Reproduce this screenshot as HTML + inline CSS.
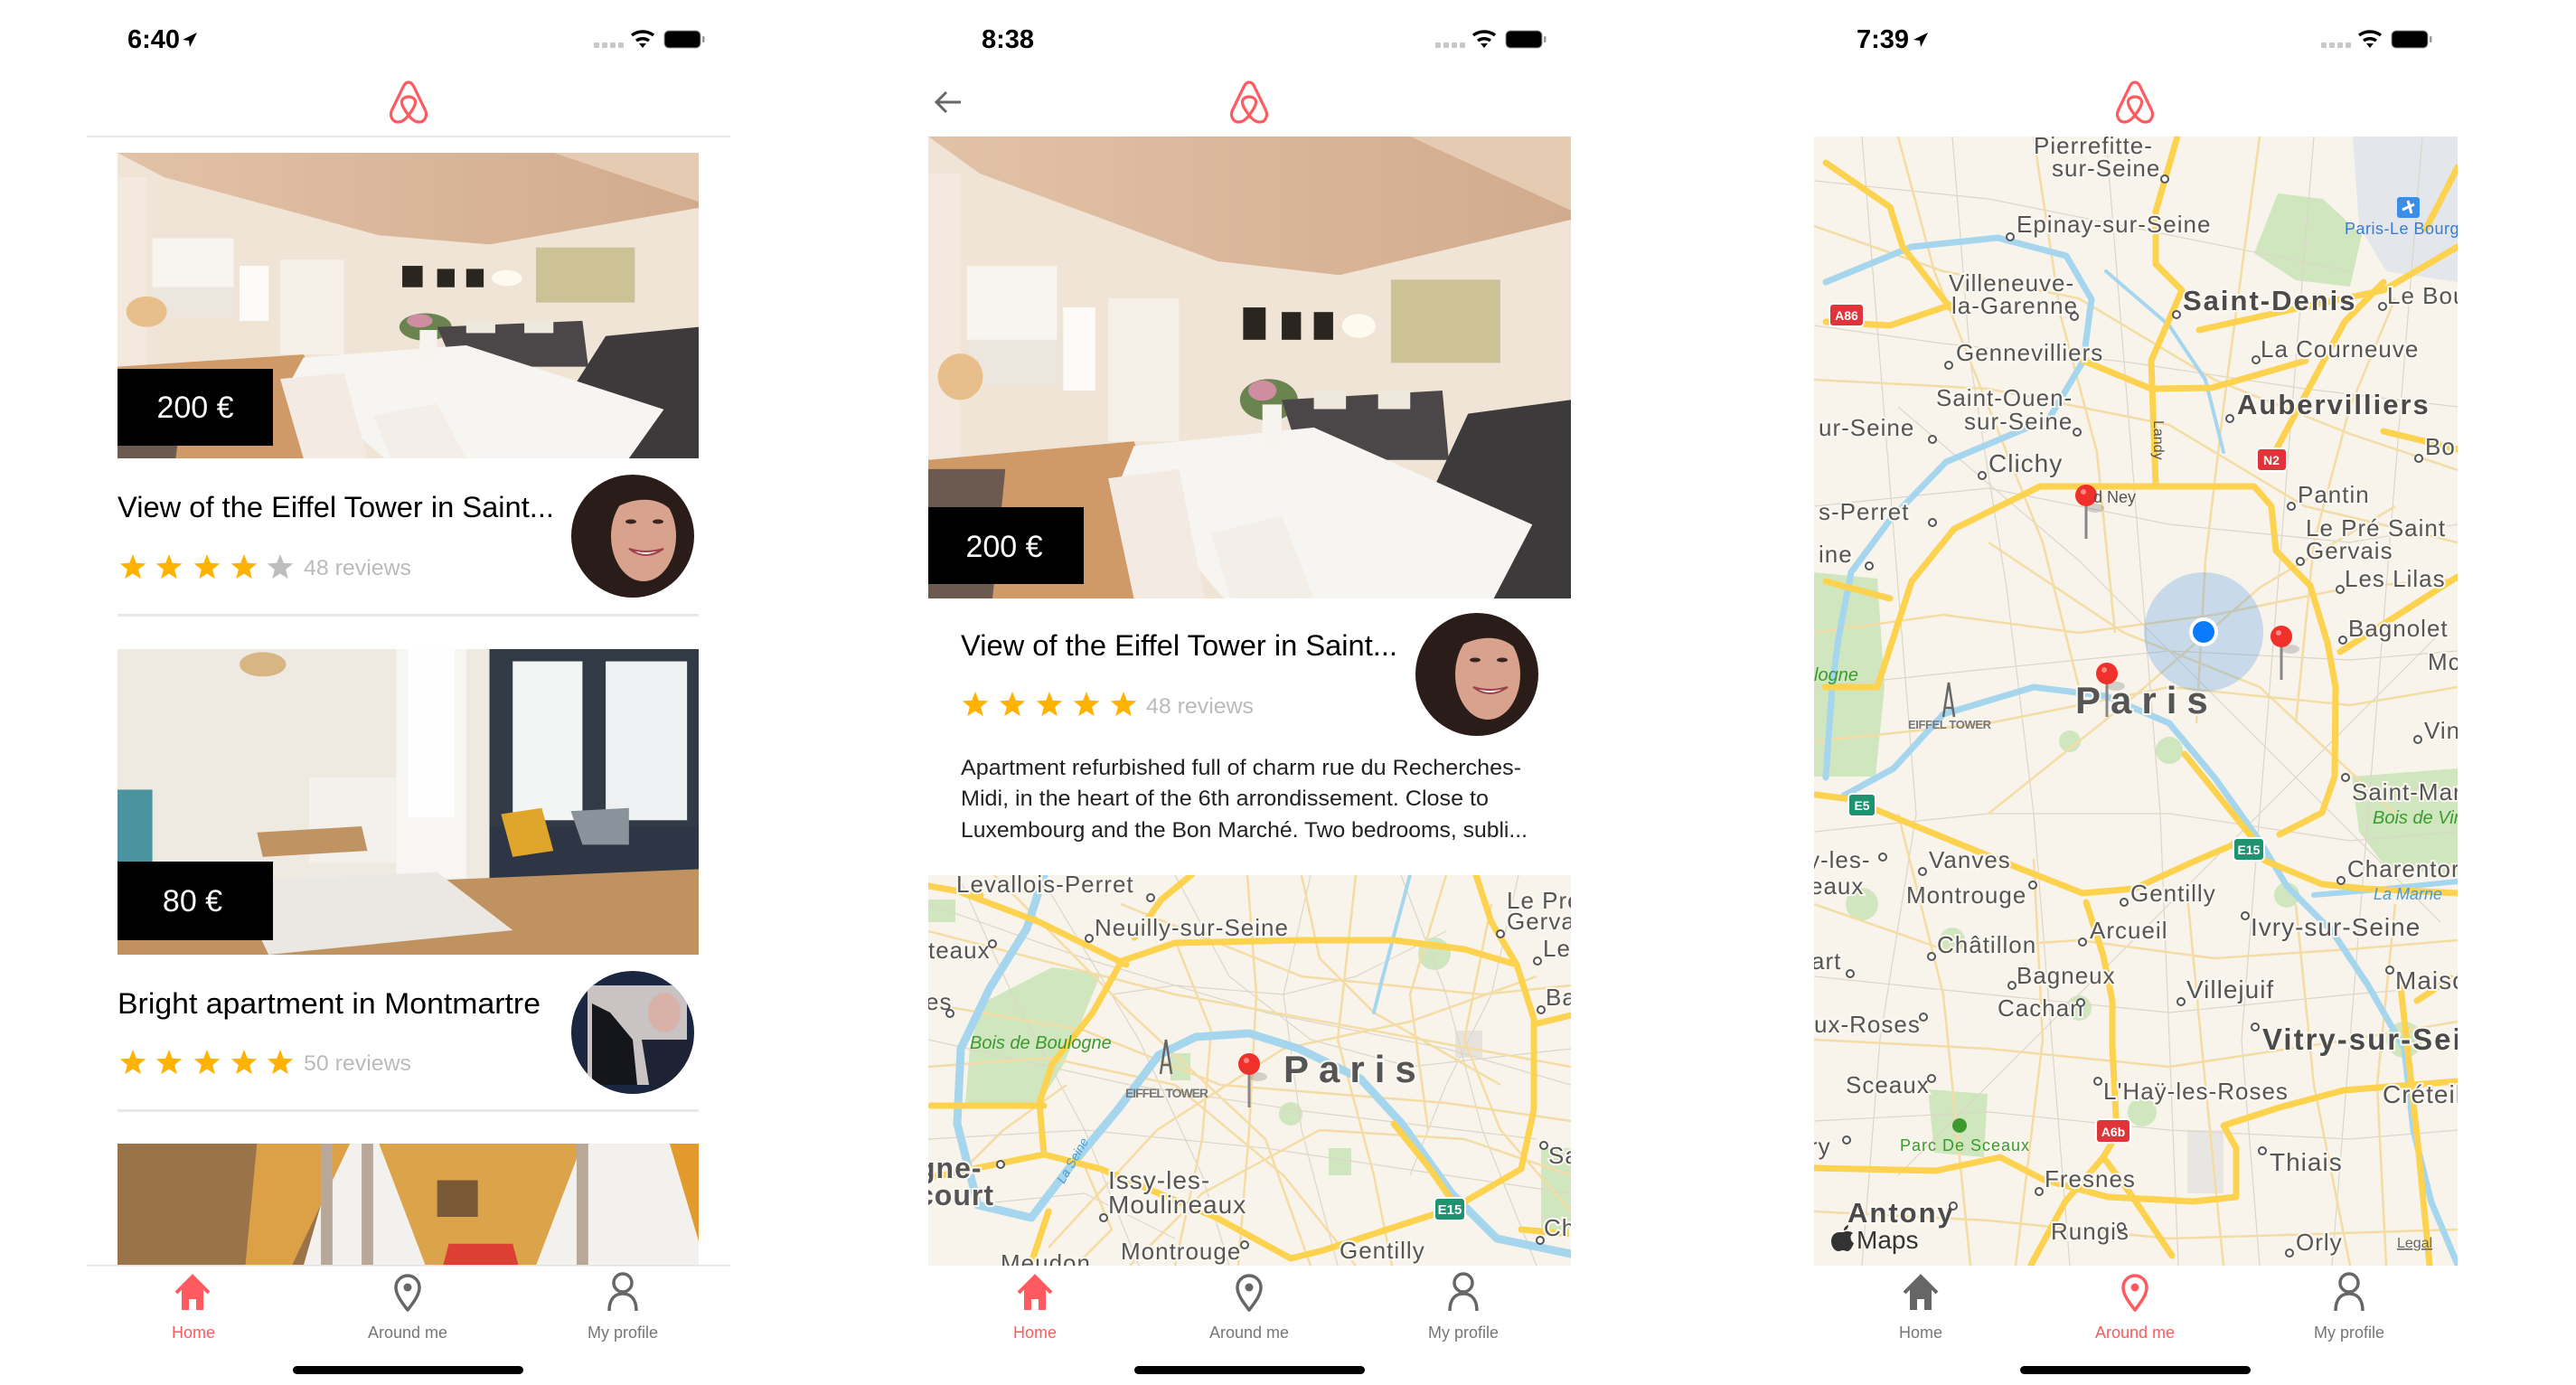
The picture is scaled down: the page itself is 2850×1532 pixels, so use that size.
<!DOCTYPE html>
<html><head><meta charset="utf-8"><style>
html,body{margin:0;padding:0;background:#fff;}
svg{display:block;font-family:"Liberation Sans",sans-serif;}
.ml{fill:#555;stroke:#fbf8f2;stroke-width:4;paint-order:stroke;font-size:26px;letter-spacing:1px;}
.mb{fill:#4a4a4a;stroke:#fbf8f2;stroke-width:4;paint-order:stroke;font-size:31px;font-weight:bold;letter-spacing:2px;}
.mg{fill:#3c9a2e;font-size:20px;font-style:italic;}
.yr{fill:none;stroke:#fcd24f;stroke-width:7;stroke-linecap:round;stroke-linejoin:round;}
.tr{fill:none;stroke:#f4dca4;stroke-width:2.5;}
.gr{fill:none;stroke:#ddd6c8;stroke-width:1.2;}
.rv{fill:none;stroke:#a6d6ee;stroke-width:9;stroke-linecap:round;stroke-linejoin:round;}
.pk{fill:#cfe6bf;}
.dot{fill:#fff;stroke:#555;stroke-width:2;}
</style></head><body>
<svg width="2850" height="1532" viewBox="0 0 2850 1532" xmlns="http://www.w3.org/2000/svg">
<defs>
<path id="star" d="M0,-15 L3.82,-5.26 L14.27,-4.64 L6.18,2.01 L8.82,12.14 L0,6.5 L-8.82,12.14 L-6.18,2.01 L-14.27,-4.64 L-3.82,-5.26 Z"/>
<linearGradient id="ceil" x1="0" y1="0" x2="1" y2="0"><stop offset="0" stop-color="#e2c2a6"/><stop offset="1" stop-color="#d2ab8d"/></linearGradient>
<symbol id="room1" viewBox="0 0 100 100" preserveAspectRatio="none">
<rect width="100" height="100" fill="#f0e4d7"/>
<polygon points="0,0 100,0 100,18 64,30 45,27 8,8" fill="url(#ceil)"/>
<polygon points="75,0 100,0 100,16" fill="#e6cbb3"/>
<rect x="0" y="8" width="5" height="70" fill="#f3e9de"/>
<rect x="6" y="28" width="14" height="16" fill="#f8f4ef"/>
<rect x="6" y="44" width="14" height="10" fill="#ece6df"/>
<rect x="21" y="37" width="5" height="18" fill="#fdfbf8"/>
<rect x="28" y="35" width="11" height="31" fill="#f6efe7"/>
<rect x="49" y="37" width="3.5" height="7" fill="#2b2520"/><rect x="55" y="38" width="3" height="6" fill="#2b2520"/><rect x="60" y="38" width="3" height="6" fill="#2b2520"/>
<rect x="72" y="31" width="17" height="18" fill="#cdc196"/>
<circle cx="67" cy="41" r="2.6" fill="#fffaf0"/>
<ellipse cx="5" cy="52" rx="3.5" ry="5" fill="#e8bf8a"/>
<circle cx="53" cy="57" r="4.5" fill="#6a8450"/><circle cx="52" cy="55" r="2.2" fill="#cf8da2"/>
<polygon points="55,57 80,55 81,70 58,70" fill="#4b4748"/>
<rect x="60" y="55" width="5" height="4" fill="#efe8dc"/><rect x="70" y="55" width="5" height="4" fill="#efe8dc"/>
<polygon points="84,60 100,57 100,100 82,100 78,78" fill="#3c3a3a"/>
<polygon points="0,70 32,66 42,100 0,100" fill="#cf9a68"/>
<polygon points="0,72 12,72 10,100 0,100" fill="#6c5a50"/>
<polygon points="32,67 60,63 94,84 88,100 46,100 30,74" fill="#f7f5f2"/>
<polygon points="28,74 39,72 43,100 32,100" fill="#f3ebe3"/>
<polygon points="44,86 55,82 60,100 47,100" fill="#f4eee8"/>
<rect x="52" y="58" width="3" height="10" fill="#f7f3ee"/>
</symbol>
<symbol id="room2" viewBox="0 0 100 100" preserveAspectRatio="none">
<rect width="100" height="100" fill="#efeae1"/>
<rect x="48" y="0" width="12" height="75" fill="#f8f6f2"/>
<rect x="50" y="0" width="8" height="55" fill="#fefefe"/>
<rect x="33" y="42" width="15" height="28" fill="#f4f1ec"/>
<rect x="64" y="0" width="36" height="78" fill="#323a45"/>
<rect x="68" y="4" width="12" height="52" fill="#f3f4f4"/><rect x="84" y="4" width="14" height="52" fill="#eef0f1"/>
<rect x="64" y="58" width="36" height="42" fill="#2e3544"/>
<polygon points="66,54 73,52 75,66 68,68" fill="#e0a62c"/>
<polygon points="78,53 88,52 88,64 80,64" fill="#8a939c"/>
<ellipse cx="25" cy="5" rx="4" ry="4" fill="#d8b684"/>
<polygon points="0,80 100,72 100,100 0,100" fill="#c0925f"/>
<polygon points="20,76 55,73 68,92 26,100" fill="#ebe8e3"/>
<polygon points="24,60 42,58 43,66 25,68" fill="#bf9462"/>
<rect x="0" y="46" width="6" height="28" fill="#4a94a0"/>
</symbol>
<symbol id="room3" viewBox="0 0 100 100" preserveAspectRatio="none">
<rect width="100" height="100" fill="#f3f1ee"/>
<polygon points="0,0 38,0 32,100 0,100" fill="#9a7448"/>
<polygon points="24,0 40,0 30,100 22,100" fill="#dca046"/>
<rect x="35" y="0" width="2" height="100" fill="#b8a89a"/>
<rect x="42" y="0" width="2" height="100" fill="#b8a89a"/>
<polygon points="45,0 80,0 72,100 53,100" fill="#dca44a"/>
<rect x="55" y="30" width="7" height="30" fill="#7a5a36"/>
<polygon points="57,82 68,82 69,100 56,100" fill="#dd4033"/>
<rect x="79" y="0" width="2" height="100" fill="#b8a89a"/>
<polygon points="95,0 100,0 100,80" fill="#e39a2d"/>
</symbol>
<clipPath id="c1"><circle cx="700" cy="593" r="68"/></clipPath>
<clipPath id="c2"><circle cx="700" cy="1142" r="68"/></clipPath>
<clipPath id="c3"><circle cx="1634" cy="746" r="68"/></clipPath>
<clipPath id="m2"><rect x="1027" y="968" width="711" height="432"/></clipPath>
<clipPath id="m3"><rect x="2007" y="151" width="712" height="1249"/></clipPath>
<g id="face">
<rect x="-70" y="-70" width="140" height="140" fill="#2a1c18"/>
<ellipse cx="12" cy="0" rx="36" ry="50" fill="#d9a28c"/>
<path d="M-30,-50 C-10,-70 30,-65 48,-40 L52,-15 C40,-42 10,-48 -22,-30 Z" fill="#2a1c18"/>
<ellipse cx="-2" cy="-16" rx="6" ry="2.5" fill="#3a2420"/><ellipse cx="28" cy="-16" rx="6" ry="2.5" fill="#3a2420"/>
<path d="M-4,14 Q14,28 34,14 Q14,20 -4,14 Z" fill="#fff" stroke="#a0404a" stroke-width="2"/>
</g>
<g id="logo" fill="none" stroke="#ff5a5f" stroke-width="3.2" stroke-linejoin="round">
<path d="M24 3 C21.5 3 19.8 4.6 18.5 7.2 L5.5 34 C3 39.5 5.5 47 12.5 47 C17 47 20.5 44 24 39.5 C27.5 44 31 47 35.5 47 C42.5 47 45 39.5 42.5 34 L29.5 7.2 C28.2 4.6 26.5 3 24 3 Z"/>
<path d="M24 39.5 C19.5 33.5 16.5 29 16.5 25 C16.5 21.3 19.8 19 24 19 C28.2 19 31.5 21.3 31.5 25 C31.5 29 28.5 33.5 24 39.5"/>
</g>
<g id="stat">
<rect x="561" y="47" width="6" height="6" rx="1" fill="#c8c8c8"/><rect x="570" y="47" width="6" height="6" rx="1" fill="#c8c8c8"/><rect x="579" y="47" width="6" height="6" rx="1" fill="#c8c8c8"/><rect x="588" y="47" width="6" height="6" rx="1" fill="#c8c8c8"/>
<path d="M603,39 A20,20 0 0 1 627,39" fill="none" stroke="#000" stroke-width="3.5"/>
<path d="M608,45 A12,12 0 0 1 622,45" fill="none" stroke="#000" stroke-width="3.5"/>
<path d="M611,48 L615,53 L619,48 Z" fill="#000"/>
<rect x="639" y="34" width="40" height="19" rx="5" fill="#000" stroke="#999" stroke-width="1"/>
<rect x="681" y="40" width="2.5" height="7" rx="1" fill="#999"/>
</g>
<g id="home"><path d="M-18,-1 L0,-19 L18,-1" fill="none" stroke-width="4"/><path d="M-12,-6 L0,-17 L12,-6 V18 H4 V6 H-4 V18 H-12 Z" stroke="none"/></g>
<g id="pin"><path d="M0,20 C-7,11 -13,3 -13,-5 A13,13 0 0 1 13,-5 C13,3 7,11 0,20 Z" fill="none" stroke-width="3.5" stroke-linejoin="round"/><circle cx="0" cy="-5" r="4.5" stroke="none"/></g>
<g id="user" fill="none" stroke-width="3.5"><circle cx="0" cy="-10" r="10"/><path d="M-15,21 C-15,7 -8,2 0,2 C8,2 15,7 15,21"/></g>
<g id="mpin"><ellipse cx="10" cy="14" rx="10" ry="5" fill="#000" opacity="0.15"/><line x1="0" y1="0" x2="0" y2="48" stroke="#888" stroke-width="3"/><circle cx="0" cy="0" r="12" fill="#f0302a"/><circle cx="-3" cy="-4" r="3" fill="#ff8a85"/></g>
</defs>

<!-- ===== PHONE 1 ===== -->
<text x="141" y="53" font-size="29" font-weight="bold" fill="#000">6:40</text>
<path d="M218,36 L202,44 L209,45 L210,52 Z" fill="#000"/>
<use href="#stat" x="96"/>
<use href="#logo" x="428" y="88"/>
<rect x="96" y="150" width="712" height="2" fill="#e8e8e8"/>
<use href="#room1" x="130" y="169" width="643" height="338"/>
<rect x="130" y="408" width="172" height="85" fill="#000"/>
<text x="216" y="462" font-size="34" fill="#fff" text-anchor="middle">200 €</text>
<text x="130" y="572" font-size="32" fill="#000" textLength="483" lengthAdjust="spacingAndGlyphs">View of the Eiffel Tower in Saint...</text>
<use href="#star" x="147" y="628" fill="#ffb300"/><use href="#star" x="187" y="628" fill="#ffb300"/><use href="#star" x="229" y="628" fill="#ffb300"/><use href="#star" x="270" y="628" fill="#ffb300"/><use href="#star" x="310" y="628" fill="#bdbdbd"/>
<text x="336" y="636" font-size="24" fill="#bbb" textLength="119" lengthAdjust="spacingAndGlyphs">48 reviews</text>
<g clip-path="url(#c1)"><use href="#face" x="700" y="593"/></g>
<rect x="130" y="679" width="643" height="3" fill="#e8e8e8"/>
<use href="#room2" x="130" y="718" width="643" height="338"/>
<rect x="130" y="953" width="172" height="87" fill="#000"/>
<text x="213" y="1008" font-size="34" fill="#fff" text-anchor="middle">80 €</text>
<text x="130" y="1121" font-size="32" fill="#000" textLength="468" lengthAdjust="spacingAndGlyphs">Bright apartment in Montmartre</text>
<use href="#star" x="147" y="1176" fill="#ffb300"/><use href="#star" x="187" y="1176" fill="#ffb300"/><use href="#star" x="229" y="1176" fill="#ffb300"/><use href="#star" x="270" y="1176" fill="#ffb300"/><use href="#star" x="310" y="1176" fill="#ffb300"/>
<text x="336" y="1184" font-size="24" fill="#bbb" textLength="119" lengthAdjust="spacingAndGlyphs">50 reviews</text>
<g clip-path="url(#c2)"><rect x="630" y="1072" width="140" height="140" fill="#1b2640"/><rect x="650" y="1090" width="110" height="110" fill="#c9c3c4"/><path d="M655,1110 L675,1120 L700,1150 L705,1200 L655,1200 Z" fill="#15151c"/><ellipse cx="735" cy="1120" rx="18" ry="22" fill="#d8b2a8"/><path d="M710,1150 L770,1150 L770,1212 L720,1212 Z" fill="#1d2235"/></g>
<rect x="130" y="1227" width="643" height="3" fill="#e8e8e8"/>
<use href="#room3" x="130" y="1265" width="643" height="135"/>
<rect x="96" y="1399" width="712" height="133" fill="#fff"/>
<rect x="96" y="1399" width="712" height="1.5" fill="#e2e2e2"/>
<use href="#home" x="213" y="1431" fill="#ff5a5f" stroke="#ff5a5f"/>
<use href="#pin" x="451" y="1429" fill="#666" stroke="#666"/>
<use href="#user" x="689" y="1429" stroke="#666"/>
<text x="214" y="1480" font-size="18" fill="#ff5a5f" text-anchor="middle">Home</text>
<text x="451" y="1480" font-size="18" fill="#777" text-anchor="middle">Around me</text>
<text x="689" y="1480" font-size="18" fill="#777" text-anchor="middle">My profile</text>
<rect x="324" y="1511" width="255" height="9" rx="4.5" fill="#000"/>

<!-- ===== PHONE 2 ===== -->
<text x="1086" y="53" font-size="29" font-weight="bold" fill="#000">8:38</text>
<use href="#stat" x="1027"/>
<path d="M1063,113 H1036 M1047,102 L1036,113 L1047,124" fill="none" stroke="#666" stroke-width="3"/>
<use href="#logo" x="1358" y="88"/>
<use href="#room1" x="1027" y="151" width="711" height="511"/>
<rect x="1027" y="561" width="172" height="85" fill="#000"/>
<text x="1111" y="616" font-size="34" fill="#fff" text-anchor="middle">200 €</text>
<text x="1063" y="725" font-size="32" fill="#000" textLength="483" lengthAdjust="spacingAndGlyphs">View of the Eiffel Tower in Saint...</text>
<use href="#star" x="1079" y="780" fill="#ffb300"/><use href="#star" x="1120" y="780" fill="#ffb300"/><use href="#star" x="1161" y="780" fill="#ffb300"/><use href="#star" x="1202" y="780" fill="#ffb300"/><use href="#star" x="1243" y="780" fill="#ffb300"/>
<text x="1268" y="789" font-size="24" fill="#bbb" textLength="119" lengthAdjust="spacingAndGlyphs">48 reviews</text>
<g clip-path="url(#c3)"><use href="#face" x="1634" y="746"/></g>
<text x="1063" y="857" font-size="24" fill="#222" textLength="620" lengthAdjust="spacingAndGlyphs">Apartment refurbished full of charm rue du Recherches-</text>
<text x="1063" y="891" font-size="24" fill="#222" textLength="584" lengthAdjust="spacingAndGlyphs">Midi, in the heart of the 6th arrondissement. Close to</text>
<text x="1063" y="926" font-size="24" fill="#222" textLength="627" lengthAdjust="spacingAndGlyphs">Luxembourg and the Bon Marché. Two bedrooms, subli...</text>

<g clip-path="url(#m2)">
<rect x="1027" y="968" width="711" height="432" fill="#f8f4ec"/>
<polygon class="pk" points="1073,1160 1086,1110 1164,1070 1218,1077 1177,1177 1150,1220 1068,1220"/>
<circle class="pk" cx="1587" cy="1055" r="18"/><rect class="pk" x="1705" y="1270" width="40" height="95"/>
<rect class="pk" x="1295" y="1165" width="22" height="30"/><circle class="pk" cx="1428" cy="1232" r="13"/><rect class="pk" x="1027" y="995" width="30" height="25"/><rect class="pk" x="1470" y="1270" width="25" height="30"/>
<rect x="1610" y="1140" width="30" height="30" fill="#e6e3df"/>
<g class="gr">
<path d="M1027,1000 L1200,1060 L1400,1120 L1600,1160 L1738,1200"/><path d="M1060,968 L1120,1100 L1200,1250 L1260,1400"/><path d="M1150,968 L1260,1150 L1330,1300 L1360,1400"/>
<path d="M1027,1260 L1200,1250 L1400,1270 L1600,1300 L1738,1320"/><path d="M1450,968 L1420,1100 L1440,1250 L1480,1400"/><path d="M1550,968 L1600,1100 L1640,1250 L1700,1400"/>
<path d="M1027,1150 L1250,1200 L1450,1230 L1700,1260"/><path d="M1300,968 L1360,1080 L1450,1150 L1560,1180 L1738,1160"/><path d="M1680,968 L1650,1100 L1600,1200 L1560,1300"/>
<path d="M1230,1100 L1300,1090 L1420,1100 L1500,1080 L1600,1030"/><path d="M1100,1330 L1200,1320 L1300,1370"/>
</g>
<g class="tr">
<path d="M1027,1030 L1300,1100 L1738,1180"/><path d="M1100,968 L1250,1120 L1400,1260 L1450,1400"/><path d="M1027,1110 L1200,1140 L1350,1200 L1600,1220 L1738,1240"/>
<path d="M1380,968 L1390,1100 L1382,1250 L1370,1400"/><path d="M1500,968 L1480,1150 L1520,1300 L1540,1400"/><path d="M1300,1040 L1340,1140 L1330,1260 L1300,1400"/>
<path d="M1600,968 L1560,1100 L1580,1250"/><path d="M1027,1180 L1160,1170 L1300,1200 L1420,1300 L1500,1400"/><path d="M1240,1000 L1440,1080 L1640,1100 L1738,1090"/>
<path d="M1160,1380 L1280,1250 L1420,1160 L1560,1130 L1700,1080"/><path d="M1250,1400 L1330,1320 L1460,1250 L1620,1260 L1738,1300"/><path d="M1440,968 L1460,1060 L1520,1120 L1660,1200"/>
<path d="M1200,1290 L1230,1360 L1190,1400"/><path d="M1060,1300 L1110,1250 L1180,1200"/><path d="M1650,1000 L1620,1150 L1660,1250 L1738,1340"/>
</g>
<path class="rv" d="M1155,968 L1136,1027 L1095,1093 L1063,1160 L1059,1243 L1082,1333 L1141,1347 L1182,1293 L1237,1227 L1282,1167 L1323,1147 L1382,1143 L1437,1160 L1505,1193 L1551,1243 L1606,1320 L1656,1370 L1738,1387"/>
<path class="rv" style="stroke-width:4" d="M1560,968 L1530,1080 L1520,1120"/>
<g class="yr">
<path d="M1633,968 L1650,1020 L1678,1067 L1697,1127 L1697,1227 L1683,1293 L1619,1330 L1587,1343 L1464,1383 L1428,1392"/>
<path d="M1300,1043 L1241,1063 L1209,1120 L1164,1177 L1150,1220 L1155,1277 L1218,1293 L1346,1347 L1428,1392"/>
<path d="M1300,1043 L1437,1040 L1542,1040 L1620,1050 L1678,1067"/>
<path d="M1063,987 L1150,1020 L1246,1067"/><path d="M1027,980 L1085,990"/>
<path d="M1255,1037 L1285,995 L1319,967"/>
<path d="M1030,1223 L1155,1223"/><path d="M1027,1303 L1155,1277"/>
<path d="M1542,1243 L1580,1290 L1610,1333"/>
<path d="M1697,1133 L1738,1123"/><path d="M1683,1360 L1738,1365"/>
<path d="M1140,1400 L1160,1340"/>
</g>
<text class="ml" x="1058" y="987">Levallois-Perret</text><circle class="dot" cx="1273" cy="993" r="4"/>
<text class="ml" x="1211" y="1035">Neuilly-sur-Seine</text><circle class="dot" cx="1205" cy="1038" r="4"/>
<text class="ml" x="1027" y="1060">teaux</text><circle class="dot" cx="1098" cy="1044" r="4"/>
<text class="ml" x="1024" y="1117">es</text><circle class="dot" cx="1051" cy="1121" r="4"/>
<text class="mg" x="1073" y="1160">Bois de Boulogne</text>
<text x="1420" y="1197" font-size="42" font-weight="bold" fill="#555" letter-spacing="11" stroke="#fbf8f2" stroke-width="4" paint-order="stroke">Paris</text>
<path d="M1290,1150 L1284,1188 M1290,1150 L1296,1188 M1285,1178 L1295,1178" stroke="#666" stroke-width="2.5" fill="none"/>
<text x="1245" y="1214" font-size="14" font-weight="bold" fill="#777" textLength="92">EIFFEL TOWER</text>
<text class="ml" x="1667" y="1005">Le Pré</text>
<text class="ml" x="1667" y="1028">Gervai</text><circle class="dot" cx="1660" cy="1033" r="4"/>
<text class="ml" x="1707" y="1058">Les</text><circle class="dot" cx="1701" cy="1063" r="4"/>
<text class="ml" x="1710" y="1112">Ba</text><circle class="dot" cx="1705" cy="1117" r="4"/>
<text class="ml" x="1713" y="1287">Sa</text><circle class="dot" cx="1708" cy="1267" r="4"/>
<text class="ml" x="1708" y="1367">Ch</text><circle class="dot" cx="1704" cy="1372" r="4"/>
<text class="ml" x="1015" y="1303" style="font-size:32px;font-weight:bold">gne-</text><circle class="dot" cx="1107" cy="1288" r="4"/>
<text class="ml" x="1015" y="1333" style="font-size:32px;font-weight:bold">court</text>
<text class="ml" x="1226" y="1315" style="font-size:28px">Issy-les-</text>
<text class="ml" x="1226" y="1342" style="font-size:28px">Moulineaux</text><circle class="dot" cx="1221" cy="1347" r="4"/>
<text class="ml" x="1240" y="1393">Montrouge</text><circle class="dot" cx="1377" cy="1377" r="4"/>
<text class="ml" x="1482" y="1392">Gentilly</text>
<text class="ml" x="1107" y="1406">Meudon</text>
<text x="1177" y="1310" font-size="14" font-style="italic" fill="#4a9ad0" transform="rotate(-60 1177 1310)">La Seine</text>
<rect x="1587" y="1325" width="34" height="25" rx="4" fill="#1f9270" stroke="#fff" stroke-width="2"/>
<text x="1604" y="1343" font-size="15" font-weight="bold" fill="#fff" text-anchor="middle">E15</text>
<use href="#mpin" x="1382" y="1177"/>
</g>

<rect x="1027" y="1400" width="711" height="132" fill="#fff"/>
<use href="#home" x="1145" y="1431" fill="#ff5a5f" stroke="#ff5a5f"/>
<use href="#pin" x="1382" y="1429" fill="#666" stroke="#666"/>
<use href="#user" x="1619" y="1429" stroke="#666"/>
<text x="1145" y="1480" font-size="18" fill="#ff5a5f" text-anchor="middle">Home</text>
<text x="1382" y="1480" font-size="18" fill="#777" text-anchor="middle">Around me</text>
<text x="1619" y="1480" font-size="18" fill="#777" text-anchor="middle">My profile</text>
<rect x="1255" y="1511" width="255" height="9" rx="4.5" fill="#000"/>

<!-- ===== PHONE 3 ===== -->
<text x="2054" y="53" font-size="29" font-weight="bold" fill="#000">7:39</text>
<path d="M2133,36 L2117,44 L2124,45 L2125,52 Z" fill="#000"/>
<use href="#stat" x="2007"/>
<use href="#logo" x="2338" y="88"/>
<g clip-path="url(#m3)">
<rect x="2007" y="151" width="712" height="1249" fill="#f8f4ec"/>
<polygon points="2603,151 2719,151 2719,312 2640,300 2610,250" fill="#e3e6ea"/>
<polygon class="pk" points="2520,214 2570,220 2613,260 2600,317 2540,310 2494,280"/>
<polygon class="pk" points="2007,633 2077,640 2085,760 2075,859 2007,859"/>
<polygon class="pk" points="2602,859 2719,850 2719,968 2640,960 2610,920"/>
<polygon class="pk" points="2133,1205 2199,1210 2195,1280 2140,1275"/>
<circle class="pk" cx="2160" cy="1040" r="14"/><circle class="pk" cx="2290" cy="820" r="12"/><circle class="pk" cx="2400" cy="830" r="15"/><circle class="pk" cx="2530" cy="990" r="14"/><circle class="pk" cx="2370" cy="1230" r="16"/><circle class="pk" cx="2660" cy="1150" r="20"/><circle class="pk" cx="2060" cy="1000" r="18"/><circle class="pk" cx="2300" cy="1115" r="14"/>
<rect x="2420" y="1250" width="40" height="70" fill="#e8e6e2"/>
<g class="gr">
<path d="M2007,200 L2200,220 L2400,260 L2600,300"/><path d="M2007,360 L2150,380 L2350,400 L2550,430 L2719,450"/><path d="M2007,560 L2200,540 L2400,580 L2600,600 L2719,580"/>
<path d="M2007,760 L2200,740 L2400,720 L2600,730 L2719,720"/><path d="M2007,920 L2200,900 L2400,900 L2600,930 L2719,920"/><path d="M2007,1080 L2200,1100 L2400,1120 L2600,1100 L2719,1090"/>
<path d="M2007,1240 L2200,1230 L2400,1250 L2600,1260 L2719,1250"/><path d="M2160,151 L2180,400 L2220,650 L2250,900 L2270,1150 L2290,1400"/>
<path d="M2330,151 L2350,400 L2370,650 L2390,900 L2400,1150 L2410,1400"/><path d="M2560,151 L2540,400 L2520,650 L2500,900 L2480,1150 L2500,1400"/>
<path d="M2680,151 L2660,400 L2640,650 L2620,900 L2600,1150 L2580,1400"/><path d="M2060,151 L2080,400 L2100,650 L2120,900 L2080,1150 L2060,1400"/>
<path d="M2100,450 L2300,620 L2500,820 L2700,1020"/><path d="M2100,1300 L2300,1100 L2500,900 L2700,700"/>
</g>
<g class="tr">
<path d="M2007,250 L2150,300 L2300,330 L2450,420 L2600,480 L2719,520"/><path d="M2007,420 L2200,430 L2400,470 L2550,560 L2719,600"/>
<path d="M2100,151 L2140,300 L2200,450 L2260,600 L2300,760"/><path d="M2250,151 L2280,350 L2320,500 L2340,700"/>
<path d="M2500,151 L2480,300 L2460,450 L2440,620 L2430,800"/><path d="M2650,330 L2600,450 L2560,600 L2540,800"/>
<path d="M2007,700 L2150,680 L2300,700 L2450,680 L2600,650 L2719,640"/><path d="M2007,820 L2200,800 L2400,760 L2600,780 L2719,760"/>
<path d="M2007,1000 L2150,1050 L2300,1040 L2450,1060 L2600,1050 L2719,1040"/><path d="M2007,1150 L2200,1160 L2400,1180 L2600,1150 L2719,1130"/>
<path d="M2100,900 L2150,1100 L2180,1400"/><path d="M2250,950 L2260,1150 L2230,1400"/><path d="M2420,990 L2440,1200 L2460,1400"/>
<path d="M2540,1000 L2560,1200 L2600,1400"/><path d="M2650,1000 L2630,1200 L2640,1400"/><path d="M2007,1340 L2200,1350 L2400,1370 L2719,1360"/>
<path d="M2200,600 L2350,700 L2500,760 L2650,900"/><path d="M2200,900 L2350,780 L2500,650 L2650,560"/>
</g>
<path class="rv" style="stroke-width:7" d="M2020,312 L2115,273 L2210,263 L2286,283 L2314,331 L2305,399 L2267,463 L2210,487 L2153,511 L2091,575 L2048,633 L2034,706 L2027,760 L2020,860"/>
<path class="rv" style="stroke-width:7" d="M2040,880 L2095,850 L2150,790 L2250,760 L2330,770 L2400,800 L2450,860 L2500,930 L2530,980 L2580,1030 L2620,1090 L2660,1160 L2670,1250 L2690,1330 L2719,1399"/>
<path class="rv" style="stroke-width:6" d="M2560,990 L2620,985 L2719,975"/>
<path class="rv" style="stroke-width:4" d="M2330,300 L2400,360 L2440,420 L2460,500"/>
<g class="yr">
<path d="M2409,151 L2385,234 L2385,292 L2414,321 L2380,399 L2385,536"/>
<path d="M2020,180 L2091,229 L2105,273 L2158,341"/><path d="M2020,356 L2091,360 L2162,336"/>
<path d="M2433,365 L2542,341 L2637,321 L2719,273"/><path d="M2719,185 L2684,253"/>
<path d="M2257,538 L2494,538 L2513,560 L2518,609 L2556,648 L2575,711 L2584,760 L2583,859 L2569,899 L2522,923"/>
<path d="M2257,538 L2162,585 L2115,643 L2077,760 L2019,760"/>
<path d="M2305,399 L2380,430 L2447,429 L2551,399"/>
<path d="M2513,507 L2594,356 L2637,312"/><path d="M2637,477 L2719,497"/>
<path d="M2020,643 L2091,662"/><path d="M2719,638 L2589,721"/>
<path d="M2009,879 L2047,884 L2142,923 L2228,958 L2304,988 L2361,983 L2427,953 L2474,933 L2508,953 L2569,978 L2617,983 L2719,988"/>
<path d="M2417,834 L2493,928"/>
<path d="M2308,998 L2327,1057 L2337,1107 L2337,1156 L2342,1255 L2327,1280 L2285,1329 L2247,1399"/>
<path d="M2327,1280 L2356,1319 L2403,1389"/>
<path d="M2007,1292 L2142,1295 L2213,1280 L2261,1305 L2332,1324 L2427,1329 L2474,1324 L2474,1270 L2460,1245 L2522,1225 L2593,1206 L2719,1196"/>
<path d="M2655,1082 L2674,1255 L2688,1399"/><path d="M2712,1082 L2674,1107"/>
</g>
<circle cx="2438" cy="699" r="66" fill="#5b9be6" opacity="0.3"/>
<circle cx="2438" cy="699" r="16" fill="#fff"/><circle cx="2438" cy="699" r="12" fill="#0a7aff"/>
<use href="#mpin" x="2308" y="548"/><use href="#mpin" x="2524" y="704"/><use href="#mpin" x="2331" y="745"/>
<text class="ml" x="2250" y="170">Pierrefitte-</text>
<text class="ml" x="2270" y="195">sur-Seine</text><circle class="dot" cx="2395" cy="198" r="4"/>
<text class="ml" x="2231" y="257">Epinay-sur-Seine</text><circle class="dot" cx="2224" cy="262" r="4"/>
<text class="ml" x="2156" y="322">Villeneuve-</text>
<text class="ml" x="2159" y="347">la-Garenne</text><circle class="dot" cx="2295" cy="350" r="4"/>
<text class="mb" x="2415" y="343">Saint-Denis</text><circle class="dot" cx="2408" cy="348" r="4"/>
<text class="ml" x="2641" y="336">Le Bou</text><circle class="dot" cx="2636" cy="339" r="4"/>
<text class="ml" x="2501" y="395">La Courneuve</text><circle class="dot" cx="2496" cy="398" r="4"/>
<text class="ml" x="2164" y="399">Gennevilliers</text><circle class="dot" cx="2156" cy="404" r="4"/>
<text class="ml" x="2142" y="449">Saint-Ouen-</text>
<text class="ml" x="2173" y="475">sur-Seine</text><circle class="dot" cx="2298" cy="478" r="4"/>
<text class="ml" x="2012" y="482">ur-Seine</text><circle class="dot" cx="2138" cy="486" r="4"/>
<text class="mb" x="2475" y="458">Aubervilliers</text><circle class="dot" cx="2467" cy="463" r="4"/>
<text class="ml" x="2683" y="503">Bo</text><circle class="dot" cx="2676" cy="507" r="4"/>
<text class="ml" x="2200" y="522" style="font-size:28px">Clichy</text><circle class="dot" cx="2193" cy="526" r="4"/>
<text class="ml" x="2542" y="556">Pantin</text><circle class="dot" cx="2535" cy="560" r="4"/>
<text x="2316" y="556" font-size="18" fill="#555">d Ney</text>
<text class="ml" x="2012" y="575">s-Perret</text><circle class="dot" cx="2138" cy="578" r="4"/>
<text class="ml" x="2551" y="593">Le Pré Saint</text>
<text class="ml" x="2551" y="618">Gervais</text><circle class="dot" cx="2545" cy="621" r="4"/>
<text class="ml" x="2012" y="622">ine</text><circle class="dot" cx="2068" cy="626" r="4"/>
<text class="ml" x="2594" y="649">Les Lilas</text><circle class="dot" cx="2589" cy="652" r="4"/>
<text class="ml" x="2598" y="704">Bagnolet</text><circle class="dot" cx="2592" cy="708" r="4"/>
<text class="ml" x="2686" y="741">Mc</text>
<text class="mg" x="2007" y="753">logne</text>
<text x="2383" y="465" font-size="16" fill="#555" transform="rotate(90 2383 465)">Landy</text>
<rect x="2652" y="218" width="25" height="23" rx="3" fill="#3a8ee6"/><path d="M2658,232 L2671,226 M2664,222 L2668,236" stroke="#fff" stroke-width="3"/>
<text x="2594" y="259" font-size="18" fill="#3a7bd5" letter-spacing="0.5">Paris-Le Bourg</text>
<rect x="2024" y="336" width="38" height="25" rx="4" fill="#e0343a" stroke="#fff" stroke-width="2"/><text x="2043" y="354" font-size="14" font-weight="bold" fill="#fff" text-anchor="middle">A86</text>
<rect x="2497" y="496" width="33" height="25" rx="4" fill="#e0343a" stroke="#fff" stroke-width="2"/><text x="2513" y="514" font-size="14" font-weight="bold" fill="#fff" text-anchor="middle">N2</text>
<text x="2296" y="789" font-size="42" font-weight="bold" fill="#555" letter-spacing="11" stroke="#fbf8f2" stroke-width="4" paint-order="stroke">Paris</text>
<path d="M2156,755 L2150,793 M2156,755 L2162,793 M2151,783 L2161,783" stroke="#666" stroke-width="2.5" fill="none"/>
<text x="2111" y="806" font-size="13" font-weight="bold" fill="#777" textLength="92">EIFFEL TOWER</text>
<text class="ml" x="2682" y="817">Vin</text><circle class="dot" cx="2675" cy="818" r="4"/>
<text class="ml" x="2602" y="885">Saint-Man</text><circle class="dot" cx="2595" cy="860" r="4"/>
<text class="mg" x="2625" y="911">Bois de Vinc</text>
<rect x="2045" y="878" width="30" height="25" rx="4" fill="#1f9270" stroke="#fff" stroke-width="2"/><text x="2060" y="896" font-size="14" font-weight="bold" fill="#fff" text-anchor="middle">E5</text>
<rect x="2471" y="927" width="34" height="25" rx="4" fill="#1f9270" stroke="#fff" stroke-width="2"/><text x="2488" y="945" font-size="14" font-weight="bold" fill="#fff" text-anchor="middle">E15</text>
<text class="ml" x="2000" y="960">y-les-</text><circle class="dot" cx="2083" cy="948" r="4"/>
<text class="ml" x="2134" y="960">Vanves</text><circle class="dot" cx="2127" cy="964" r="4"/>
<text class="ml" x="2002" y="989">eaux</text>
<text class="ml" x="2109" y="999">Montrouge</text><circle class="dot" cx="2249" cy="979" r="4"/>
<text class="ml" x="2357" y="997">Gentilly</text><circle class="dot" cx="2350" cy="998" r="4"/>
<text class="ml" x="2597" y="970">Charentor</text><circle class="dot" cx="2590" cy="974" r="4"/>
<text x="2626" y="995" font-size="18" font-style="italic" fill="#4a9ad0">La Marne</text>
<text class="ml" x="2490" y="1035" style="font-size:28px">Ivry-sur-Seine</text><circle class="dot" cx="2484" cy="1013" r="4"/>
<text class="ml" x="2312" y="1038">Arcueil</text><circle class="dot" cx="2304" cy="1042" r="4"/>
<text class="ml" x="2143" y="1054">Châtillon</text><circle class="dot" cx="2137" cy="1058" r="4"/>
<text class="ml" x="2004" y="1072">art</text><circle class="dot" cx="2047" cy="1077" r="4"/>
<text class="ml" x="2231" y="1088">Bagneux</text><circle class="dot" cx="2226" cy="1090" r="4"/>
<text class="ml" x="2650" y="1094" style="font-size:28px">Maisc</text><circle class="dot" cx="2644" cy="1073" r="4"/>
<text class="ml" x="2419" y="1104" style="font-size:28px">Villejuif</text><circle class="dot" cx="2413" cy="1108" r="4"/>
<text class="ml" x="2210" y="1124">Cachan</text><circle class="dot" cx="2302" cy="1109" r="4"/>
<text class="ml" x="2007" y="1142">ux-Roses</text><circle class="dot" cx="2128" cy="1125" r="4"/>
<text class="mb" x="2503" y="1161" style="font-size:33px">Vitry-sur-Seine</text><circle class="dot" cx="2495" cy="1136" r="4"/>
<text class="ml" x="2042" y="1209">Sceaux</text><circle class="dot" cx="2137" cy="1193" r="4"/>
<text class="ml" x="2327" y="1216">L'Haÿ-les-Roses</text><circle class="dot" cx="2321" cy="1196" r="4"/>
<text class="ml" x="2636" y="1220" style="font-size:28px">Créteil</text>
<rect x="2319" y="1238" width="38" height="26" rx="4" fill="#e0343a" stroke="#fff" stroke-width="2"/><text x="2338" y="1257" font-size="14" font-weight="bold" fill="#fff" text-anchor="middle">A6b</text>
<text class="ml" x="2002" y="1277">ry</text><circle class="dot" cx="2043" cy="1261" r="4"/>
<circle cx="2168" cy="1245" r="8" fill="#3c9a2e"/>
<text x="2102" y="1273" font-size="18" fill="#3c9a2e" letter-spacing="1">Parc De Sceaux</text>
<text class="ml" x="2511" y="1295" style="font-size:28px">Thiais</text><circle class="dot" cx="2503" cy="1273" r="4"/>
<text class="ml" x="2262" y="1313">Fresnes</text><circle class="dot" cx="2256" cy="1318" r="4"/>
<text class="mb" x="2044" y="1352">Antony</text><circle class="dot" cx="2161" cy="1334" r="4"/>
<text class="ml" x="2269" y="1371">Rungis</text><circle class="dot" cx="2347" cy="1357" r="4"/>
<text class="ml" x="2540" y="1383">Orly</text><circle class="dot" cx="2533" cy="1386" r="4"/>
<text x="2652" y="1380" font-size="16" fill="#666" text-decoration="underline">Legal</text>
<path d="M2035,1363 C2029,1363 2026,1368 2026,1373 C2026,1379 2030,1384 2034,1384 C2036,1384 2037,1383 2039,1383 C2041,1383 2042,1384 2044,1384 C2047,1384 2050,1378 2051,1375 C2047,1373 2046,1366 2050,1364 C2048,1362 2045,1362 2043,1362 C2041,1362 2040,1363 2039,1363 C2038,1363 2037,1363 2035,1363 Z M2040,1361 C2040,1358 2042,1356 2045,1355 C2045,1358 2043,1361 2040,1361 Z" fill="#333"/>
<text x="2054" y="1381" font-size="28" fill="#333">Maps</text>
</g>
<rect x="2007" y="1400" width="712" height="132" fill="#fff"/>
<use href="#home" x="2125" y="1431" fill="#666" stroke="#666"/>
<use href="#pin" x="2362" y="1429" fill="#ff5a5f" stroke="#ff5a5f"/>
<use href="#user" x="2599" y="1429" stroke="#666"/>
<text x="2125" y="1480" font-size="18" fill="#777" text-anchor="middle">Home</text>
<text x="2362" y="1480" font-size="18" fill="#ff5a5f" text-anchor="middle">Around me</text>
<text x="2599" y="1480" font-size="18" fill="#777" text-anchor="middle">My profile</text>
<rect x="2235" y="1511" width="255" height="9" rx="4.5" fill="#000"/>
</svg>
</body></html>
